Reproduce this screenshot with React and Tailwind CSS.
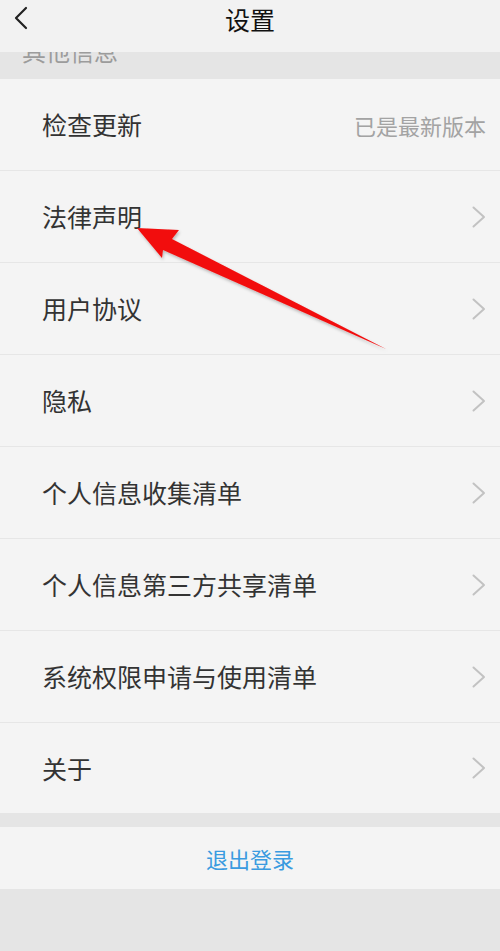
import React from "react";

const items = [
  { title: "检查更新", note: "已是最新版本" },
  { title: "法律声明" },
  { title: "用户协议" },
  { title: "隐私" },
  { title: "个人信息收集清单" },
  { title: "个人信息第三方共享清单" },
  { title: "系统权限申请与使用清单" },
  { title: "关于" },
];

const Chevron = () => (
  <svg width="14" height="22" viewBox="0 0 14 22" fill="none">
    <path d="M1.5 1.5 L12 11 L1.5 20.5" stroke="#c2c2c2" strokeWidth="2" strokeLinecap="round" strokeLinejoin="round" />
  </svg>
);

const Row = ({ title, note, last }) => (
  <div
    className={`flex items-center justify-between pl-[42px] pr-[14px] bg-[#f4f4f4] ${
      last ? "h-[90px]" : "h-[92px] border-b border-[#e6e6e6]"
    }`}
  >
    <span className="text-[25px] leading-none text-[#333333]">{title}</span>
    {note ? (
      <span className="text-[22px] leading-none text-[#a3a3a3]">{note}</span>
    ) : (
      <Chevron />
    )}
  </div>
);

const App = () => {
  return (
    <div
      className="relative w-[500px] h-[951px] bg-[#e5e5e5] overflow-hidden"
      style={{ fontFamily: '"Noto Sans CJK SC", "Noto Sans", sans-serif' }}
    >
      <header className="relative flex items-center justify-center h-[52px] bg-[#f2f2f2] z-10">
        <button className="absolute left-[12px] top-[6px] p-0">
          <svg width="18" height="24" viewBox="0 0 18 24" fill="none">
            <path d="M14 2 L4 12 L14 22" stroke="#222222" strokeWidth="2.2" strokeLinecap="round" strokeLinejoin="round" />
          </svg>
        </button>
        <h1 className="-mt-[13px] text-[25px] leading-none text-[#111111]">设置</h1>
      </header>

      <div className="h-[27px] bg-[#e5e5e5] overflow-hidden pl-[22px]">
        <div className="-mt-[13px] text-[24px] leading-[24px] text-[#9c9c9c]">其他信息</div>
      </div>

      <section className="flex flex-col">
        {items.map((item, i) => (
          <Row key={item.title} {...item} last={i === items.length - 1} />
        ))}
      </section>

      <div className="h-[14px]" />

      <button className="flex items-center justify-center w-full h-[62px] bg-[#f4f4f4]">
        <span className="text-[22px] leading-none text-[#3a9be0]">退出登录</span>
      </button>

      <svg
        className="absolute left-0 top-0 pointer-events-none"
        width="500"
        height="951"
        viewBox="0 0 500 951"
      >
        <defs>
          <filter id="sh" x="-10%" y="-10%" width="130%" height="130%">
            <feDropShadow dx="1" dy="2" stdDeviation="1.5" floodColor="#000" floodOpacity="0.25" />
          </filter>
        </defs>
        <polygon
          points="137,228 179,230 172,239 386,349 163,250 162,258"
          fill="#f20d0d"
          filter="url(#sh)"
        />
      </svg>
    </div>
  );
};

export default App;
